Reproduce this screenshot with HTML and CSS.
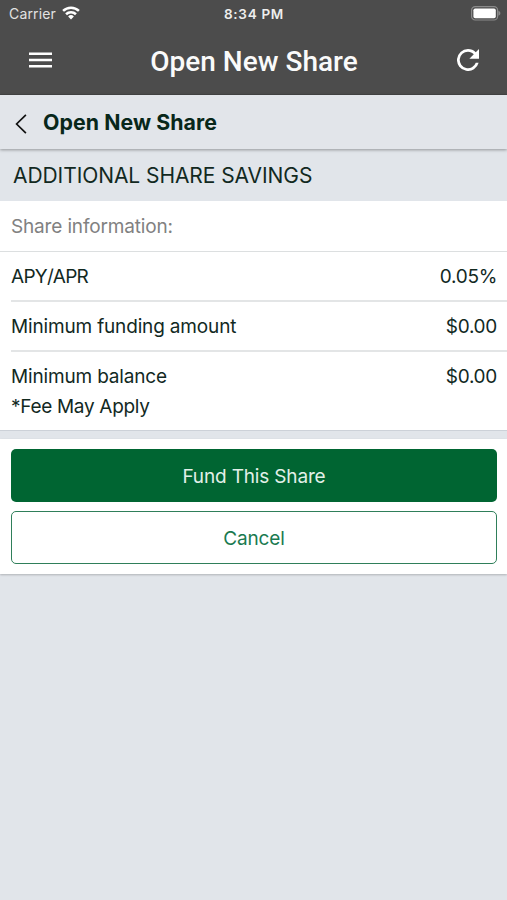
FILE: index.html
```html
<!DOCTYPE html>
<html lang="en">
<head>
<meta charset="utf-8">
<title>Open New Share</title>
<link rel="stylesheet" href="styles.css">
</head>
<body>
<header class="top">
  <div class="status">
    <div class="carrier"><span class="carrier-name">Carrier</span>
      <svg class="wifi" width="18" height="14" viewBox="0 0 20 15"><g fill="none" stroke="#fff" stroke-width="2.8"><path d="M1.2 5.2a12.5 12.5 0 0 1 17.6 0"/><path d="M4.5 8.9a7.8 7.8 0 0 1 11 0"/></g><path fill="#fff" d="M10 14.6 6.8 11.4a4.6 4.6 0 0 1 6.4 0z"/></svg>
    </div>
    <div class="clock"><span>8:34 PM</span></div>
    <svg class="battery" width="31" height="15" viewBox="0 0 31 15"><rect x="1.6" y=".6" width="26" height="13.4" rx="3.6" fill="none" stroke="#8a8a8a" stroke-width="1.2"/><rect x="3.4" y="2.4" width="22.4" height="9.8" rx="1.8" fill="#fff"/><path d="M28.4 4.8c2.6 1.2 2.6 3.8 0 5z" fill="#8a8a8a"/></svg>
  </div>
  <div class="nav">
    <svg class="menu" width="23" height="16" viewBox="0 0 23 16"><path d="M0 1.7h23M0 8h23M0 14.3h23" stroke="#fff" stroke-width="2.4"/></svg>
    <h1 class="title"><span>Open New Share</span></h1>
    <svg class="refresh" width="22" height="22" viewBox="4 4 16 16"><path fill="#fff" d="M17.65 6.35A7.96 7.96 0 0 0 12 4a8 8 0 1 0 7.73 10h-2.08A6 6 0 1 1 12 6c1.66 0 3.14.69 4.22 1.78L13 11h7V4z"/></svg>
  </div>
</header>
<div class="subhead">
  <svg class="back" width="12" height="20" viewBox="0 0 12 20"><path d="M10.9 .8 1.6 10l9.3 9.2" fill="none" stroke="#111" stroke-width="1.7"/></svg>
  <h2 class="subtitle"><span>Open New Share</span></h2>
</div>
<h3 class="section"><span>ADDITIONAL SHARE SAVINGS</span></h3>
<section class="info">
  <div class="label"><span>Share information:</span></div>
  <div class="rows">
    <div class="row"><span class="apy">APY/APR</span><span class="value">0.05%</span></div>
    <div class="row"><span class="name">Minimum funding amount</span><span class="value">$0.00</span></div>
    <div class="row tall"><div class="stack"><span class="balance">Minimum balance</span><span class="fee">*Fee May Apply</span></div><span class="value">$0.00</span></div>
  </div>
</section>
<div class="actions">
  <button class="btn primary"><span>Fund This Share</span></button>
  <button class="btn outline"><span>Cancel</span></button>
</div>
</body>
</html>
```
FILE: styles.css
```css
* { box-sizing: border-box; }
body { margin: 0; min-height: 900px; background: #e1e5ea; color: #12291f; font: 400 19px/29px Inter, "Liberation Sans", sans-serif; letter-spacing: -.16px; }
h1, h2, h3 { margin: 0; font-weight: 400; }
svg { display: block; flex: none; }
.top { height: 95px; background: #4c4c4c; color: #fff; border-bottom: 1px solid #444; }
.status { height: 28px; padding: 0 6px 0 9px; display: grid; grid-template-columns: 1fr auto 1fr; align-items: center; font-size: 14px; line-height: 28px; }
.carrier { display: flex; align-items: center; gap: 6px; color: #e2e2e2; letter-spacing: .15px; }
.wifi { margin-top: -3px; }
.clock { font-size: 13.5px; font-weight: 600; letter-spacing: .7px; color: #eee; margin-right: 2px; }
.battery { justify-self: end; margin-top: -2px; }
.nav { height: 66px; padding: 0 28px 0 29px; display: flex; align-items: center; justify-content: space-between; }
.menu { margin-top: -3px; }
.refresh { margin-top: -2px; }
.title { font: 500 28px/66px Roboto, sans-serif; letter-spacing: 0; color: #fafafa; padding: 1px 1px 0 0; }
.subhead { position: relative; height: 54px; padding: 0 15px; display: flex; align-items: center; gap: 16px; background: #e2e5ea; box-shadow: 0 1px 3px rgba(0,0,0,.35); }
.back { margin-top: 4px; }
.subtitle { font-size: 21.3px; font-weight: 700; letter-spacing: .07px; color: #08271a; }
.section { height: 52px; padding-left: 13px; font-size: 21px; line-height: 53px; letter-spacing: -.07px; background: #e1e5ea; }
.info { height: 230px; background: #fff; border-bottom: 1px solid #ccd1d8; }
.label { height: 51px; padding-left: 11px; line-height: 51px; color: #818181; border-bottom: 1px solid #dcdfe0; }
.rows { padding-left: 11px; }
.row { height: 50px; padding: 10px 10px 0 0; display: flex; justify-content: space-between; border-bottom: 2px solid #e3e5e6; }
.apy { letter-spacing: -.7px; }
.value { letter-spacing: -.3px; }
.stack { display: flex; flex-direction: column; gap: 1px; }
.fee { letter-spacing: -.3px; }
.tall { height: 78px; border: 0; }
.actions { height: 135px; margin-top: 8px; padding: 10px 10px 0 11px; background: #fff; box-shadow: 0 1px 2px rgba(0,0,0,.22); display: flex; flex-direction: column; gap: 9px; }
.btn { height: 53px; padding: 2px 0 0; border: 0; border-radius: 5px; font: inherit; letter-spacing: -.16px; }
.primary { background: #006532; color: #e2f0e8; }
.outline { background: #fff; color: #1a7a50; border: 1px solid #2f7f5a; }
```
